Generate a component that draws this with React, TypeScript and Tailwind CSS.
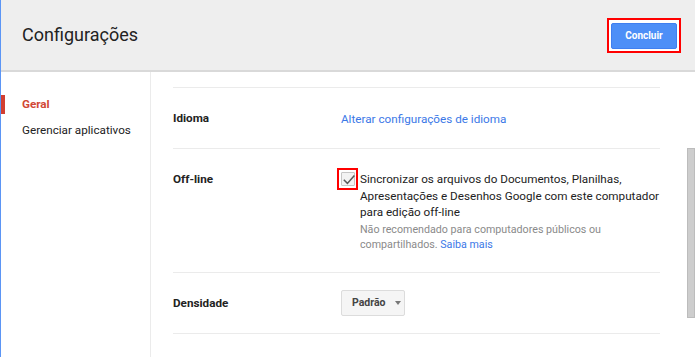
import React from "react";

const font = { fontFamily: "Roboto, 'Liberation Sans', Arial, sans-serif" };

function Checkmark() {
  return (
    <svg width="14" height="14" viewBox="0 0 14 14" className="block">
      <path d="M1.8 6.8 L5.4 10.4 L12.4 2.4" fill="none" stroke="#5a5a5a" strokeWidth="1.5" />
    </svg>
  );
}

function SettingRow({ label, children, className }: { label: string; children: React.ReactNode; className?: string }) {
  return (
    <div className={"flex border-b border-[#ebebeb] " + (className ?? "")}>
      <div className="w-[168px] shrink-0 text-[11.7px] font-bold text-[#222] leading-[20px]">{label}</div>
      <div className="flex-1">{children}</div>
    </div>
  );
}

export default function App() {
  return (
    <div style={font} className="w-[695px] h-[357px] overflow-hidden bg-white border-l border-[#5b95f5] flex flex-col">
      {/* --- HEADER --- */}
      <div className="h-[70px] shrink-0 bg-[#eeeeee] flex items-center justify-between pl-[21px] pr-[14px]">
        <h1 className="text-[18px] text-[#222] leading-none">Configurações</h1>
        <div className="border-2 border-[#ff0000] p-[2px] bg-white mt-[1px]">
          <button className="w-[66px] h-[26px] bg-[#4d8ff7] border border-[#3f7ff0] text-white text-[10px] font-bold rounded-[2px]">
            Concluir
          </button>
        </div>
      </div>
      <div className="h-[2px] shrink-0 bg-[#d9d9d9]" />

      <div className="flex flex-1 min-h-0">
        {/* --- SIDEBAR --- */}
        <div className="w-[150px] shrink-0 border-r border-[#ebebeb] pt-[23px]">
          <div className="relative h-[19px] leading-[19px] pl-[21px] text-[11.7px] font-bold text-[#d14836] mb-[7px]">
            <span className="absolute left-0 top-0 w-[4px] h-[19px] bg-[#d23f31]" />
            Geral
          </div>
          <div className="h-[19px] leading-[19px] pl-[21px] text-[11.7px] text-[#222]">Gerenciar aplicativos</div>
        </div>

        {/* --- CONTENT --- */}
        <div className="flex flex-1">
          <div className="w-[509px] pl-[22px] pt-[15px]">
            <div className="border-t border-[#ebebeb]">
              <SettingRow label="Idioma" className="h-[61px] items-center">
                <a className="text-[11.7px] text-[#3b78e7] leading-[20px]">Alterar configurações de idioma</a>
              </SettingRow>

              <SettingRow label="Off-line" className="h-[124px] pt-[20px]">
                <div className="flex pt-[2px]">
                  <div className="relative w-[14px] h-[14px] mt-[1px] shrink-0 bg-[#f3f3f3] border border-[#c6c6c6] rounded-[1px]">
                    <Checkmark />
                    <span className="absolute -left-[5px] -top-[5px] w-[21px] h-[22px] border-2 border-[#ff0000]" />
                  </div>
                  <div className="pl-[5px] whitespace-nowrap">
                    <p className="text-[11.7px] text-[#222] leading-[16.5px]">
                      Sincronizar os arquivos do Documentos, Planilhas,
                      <br />
                      Apresentações e Desenhos Google com este computador
                      <br />
                      para edição off-line
                    </p>
                    <p className="text-[10.7px] text-[#8a8a8a] leading-[15px] mt-[1px]">
                      Não recomendado para computadores públicos ou
                      <br />
                      compartilhados. <a className="text-[#3b78e7]">Saiba mais</a>
                    </p>
                  </div>
                </div>
              </SettingRow>

              <SettingRow label="Densidade" className="h-[61px] items-center">
                <div className="w-[64px] h-[26px] bg-[#f5f5f5] border border-[#dcdcdc] rounded-[2px] flex items-center pl-[10px]">
                  <span className="text-[10.5px] font-bold text-[#444]">Padrão</span>
                  <span className="ml-[10px] w-0 h-0 border-l-[3.5px] border-r-[3.5px] border-t-[4px] border-l-transparent border-r-transparent border-t-[#777]" />
                </div>
              </SettingRow>
            </div>
          </div>

          {/* scrollbar */}
          <div className="flex-1 flex justify-end">
            <div className="mt-[76px] w-[8px] h-[170px] bg-[#cdcdcd] border border-[#bcbcbc]" />
          </div>
        </div>
      </div>
    </div>
  );
}
